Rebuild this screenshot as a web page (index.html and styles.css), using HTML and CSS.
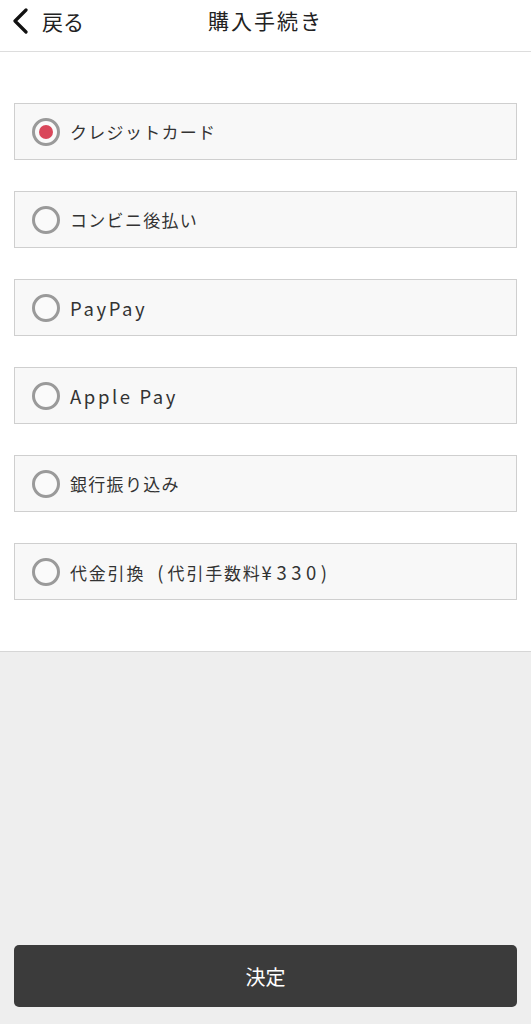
FILE: index.html
```html
<!DOCTYPE html>
<html lang="ja">
<head>
    <meta charset="utf-8">
    <title>購入手続き</title>
    <link rel="stylesheet" href="styles.css">
</head>
<body>
    <div class="header">
        <a class="back" href="#">
            <svg width="18" height="26" viewBox="0 0 18 26"><path d="M15 2 L4 13 L15 24" fill="none" stroke="#111" stroke-width="3.2" stroke-linecap="round" stroke-linejoin="round"/></svg>
            <span>戻る</span>
        </a>
        <div class="title">購入手続き</div>
    </div>

    <div class="payments">
        <label class="option">
            <input type="radio" name="pay" checked>
            <span class="mark"></span>
            <span class="label">クレジットカード</span>
        </label>
        <label class="option">
            <input type="radio" name="pay">
            <span class="mark"></span>
            <span class="label">コンビニ後払い</span>
        </label>
        <label class="option">
            <input type="radio" name="pay">
            <span class="mark"></span>
            <span class="label latin">PayPay</span>
        </label>
        <label class="option">
            <input type="radio" name="pay">
            <span class="mark"></span>
            <span class="label latin">Apple Pay</span>
        </label>
        <label class="option">
            <input type="radio" name="pay">
            <span class="mark"></span>
            <span class="label">銀行振り込み</span>
        </label>
        <label class="option">
            <input type="radio" name="pay">
            <span class="mark"></span>
            <span class="label cod">代金引換<span class="paren"> (</span>代引手数料<span class="price">¥330)</span></span>
        </label>
    </div>

    <div class="footer">
        <button class="submit">決定</button>
    </div>
</body>
</html>
```

FILE: styles.css
```css
body {
    margin: 0;
    height: 100vh;
    display: flex;
    flex-direction: column;
    font-family: "Noto Sans CJK JP", "Noto Sans", sans-serif;
    color: #333;
    background: #fff;
}

.header {
    position: relative;
    height: 52px;
    border-bottom: 1px solid #ddd;
    display: flex;
    justify-content: center;
    box-sizing: border-box;
}

.back {
    position: absolute;
    left: 11px;
    top: 8px;
    display: flex;
    align-items: center;
    gap: 13px;
    color: #222;
    text-decoration: none;
    font-size: 21px;
    line-height: 26px;
}

.title {
    margin-top: 6px;
    font-size: 21px;
    line-height: 28px;
    color: #222;
    letter-spacing: 2px;
}

.payments {
    padding: 51px 14px 51px;
    display: flex;
    flex-direction: column;
    gap: 31px;
    border-bottom: 1px solid #d6d6d6;
}

.option {
    height: 57px;
    box-sizing: border-box;
    border: 1.5px solid #cfcfcf;
    background: #f8f8f8;
    display: flex;
    align-items: center;
    padding-left: 17px;
    cursor: pointer;
}

.option input {
    display: none;
}

.mark {
    width: 22px;
    height: 22px;
    border: 3px solid #9a9a9a;
    border-radius: 50%;
    display: flex;
    align-items: center;
    justify-content: center;
    background: #fafafa;
}

.option input:checked + .mark::after {
    content: "";
    width: 14px;
    height: 14px;
    border-radius: 50%;
    background: #d9475a;
}

.label {
    margin-left: 10px;
    font-size: 17px;
    letter-spacing: 1.3px;
    color: #333;
}

.latin {
    font-size: 18.5px;
    letter-spacing: 2.6px;
}

.cod {
    letter-spacing: 1.8px;
}

.paren {
    font-size: 18.5px;
    letter-spacing: 4px;
    margin-left: 4px;
}

.price {
    font-size: 18.5px;
    letter-spacing: 4.5px;
}

.footer {
    flex: 1;
    background: #eeeeee;
    display: flex;
    align-items: flex-end;
    padding: 0 14px 17px;
}

.submit {
    width: 100%;
    height: 62px;
    border: none;
    border-radius: 5px;
    background: #3b3b3b;
    color: #fff;
    font-family: inherit;
    font-size: 20px;
}
```
